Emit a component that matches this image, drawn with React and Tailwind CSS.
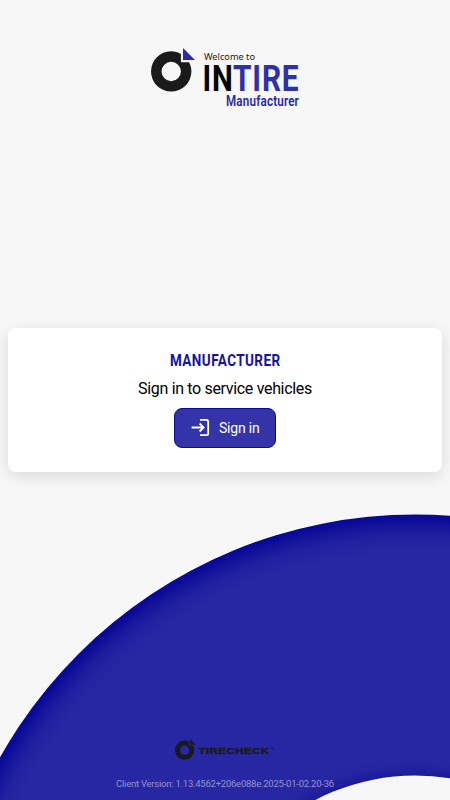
const TireMark = ({ className, arrow }) => (
  <svg viewBox="0 0 44 44" className={className} aria-hidden="true">
    <path
      fill="#1a1a1a"
      fillRule="evenodd"
      d="M20 3.2C23.6 3.2 27 4.2 29.9 5.9V14.2H38.1C39.6 17 40.4 20.2 40.4 23.5A20.2 20.2 0 1 1 20 3.2ZM20.2 13.8A9.7 9.7 0 1 0 20.2 33.2A9.7 9.7 0 1 0 20.2 13.8Z"
    />
    <path fill={arrow} d="M32 0L44 12H32Z" />
  </svg>
);

const SignInIcon = () => (
  <svg viewBox="0 0 20 18" className="h-[18px] w-5" fill="none" stroke="white" strokeWidth="1.8" aria-hidden="true">
    <path d="M0.6 8.5H12.5M8.6 4.5L12.6 8.5L8.6 12.5" />
    <path d="M9 0.9H15.6Q17.2 0.9 17.2 2.5V14.5Q17.2 16.1 15.6 16.1H9" />
  </svg>
);

const BackgroundTire = () => (
  <svg viewBox="0 0 450 800" className="absolute inset-0 h-full w-full" aria-hidden="true">
    <defs>
      <radialGradient id="tire" gradientUnits="userSpaceOnUse" cx="415" cy="990.5" r="476">
        <stop offset="0.452" stopColor="#1a1a9d" />
        <stop offset="0.475" stopColor="#2525a2" />
        <stop offset="0.5" stopColor="#2727a3" />
        <stop offset="0.92" stopColor="#2727a3" />
        <stop offset="0.95" stopColor="#2222a1" />
        <stop offset="0.975" stopColor="#16169c" />
        <stop offset="0.99" stopColor="#0b0b99" />
        <stop offset="1" stopColor="#080898" />
      </radialGradient>
    </defs>
    <circle cx="415" cy="990.5" r="476" fill="url(#tire)" />
    <circle cx="415" cy="990.5" r="215" fill="#f7f7f7" />
  </svg>
);

const Logo = () => (
  <div className="flex h-16 w-[148px]">
    <TireMark className="h-11 w-11 shrink-0" arrow="#2c2caa" />
    <svg viewBox="0 0 104 64" className="h-16 w-[104px] overflow-visible" fontFamily="Roboto, sans-serif">
      <text x="9" y="11.5" fontSize="9.5" fill="#222" fontFamily="'Noto Sans', sans-serif" textLength="51" lengthAdjust="spacingAndGlyphs">
        Welcome to
      </text>
      <text x="7.5" y="43" fontSize="37.5" fontWeight="700" letterSpacing="1" fill="#000" textLength="31" lengthAdjust="spacingAndGlyphs">
        IN
      </text>
      <text x="38" y="43" fontSize="37.5" fontWeight="700" letterSpacing="1" fill="#3030ab" textLength="66.5" lengthAdjust="spacingAndGlyphs">
        TIRE
      </text>
      <text x="31" y="58" fontSize="14" fontWeight="600" letterSpacing="0.2" fill="#2727a8" textLength="73" lengthAdjust="spacingAndGlyphs">
        Manufacturer
      </text>
    </svg>
  </div>
);

const SignInCard = () => (
  <section className="mx-2 flex h-36 flex-col items-center rounded-lg bg-white pt-5 shadow-[0_4px_16px_rgba(0,0,0,0.12)]">
    <h1>
      <svg viewBox="0 0 112 24" className="h-6 w-28 overflow-visible" fontFamily="Roboto, sans-serif">
        <text x="1" y="18" fontSize="16.5" fontWeight="700" letterSpacing="0.5" fill="#1414a0" textLength="110.5" lengthAdjust="spacingAndGlyphs">
          MANUFACTURER
        </text>
      </svg>
    </h1>
    <p className="mt-[5px] text-base leading-6 tracking-[-0.33px] text-black">Sign in to service vehicles</p>
    <button className="mt-[7px] flex h-10 w-[102px] items-center gap-2 rounded-lg border border-[#0a0a99] bg-[#3434a8] pl-4 text-sm tracking-[-0.2px] text-white">
      <SignInIcon />
      <span className="-mt-px">Sign in</span>
    </button>
  </section>
);

const Footer = () => (
  <footer className="mt-auto flex flex-col items-center pb-[9px]">
    <div className="flex h-5 w-[101px] items-start">
      <TireMark className="-mt-px h-[21px] w-[21px] shrink-0" arrow="#1a1a1a" />
      <svg viewBox="0 0 80 20" className="h-5 w-20 overflow-visible" fontFamily="'Liberation Sans', sans-serif" fill="#1a1a1a">
        <text x="2.5" y="13.5" fontSize="8.8" fontWeight="700" stroke="#1a1a1a" strokeWidth="0.4" letterSpacing="0.3" textLength="71" lengthAdjust="spacingAndGlyphs">
          TIRECHECK
        </text>
        <text x="74.5" y="9.5" fontSize="3">
          TM
        </text>
      </svg>
    </div>
    <p className="mt-4 text-[9.5px] leading-[15px] tracking-[-0.24px] whitespace-nowrap text-[#9292d0]">
      Client Version: 1.13.4562+206e088e.2025-01-02.20-36
    </p>
  </footer>
);

export default function App() {
  return (
    <main className="relative h-[800px] w-full overflow-hidden bg-[#f7f7f7] font-['Roboto',sans-serif]">
      <BackgroundTire />
      <div className="relative flex h-full flex-col">
        <header className="flex h-[328px] justify-center pt-12">
          <Logo />
        </header>
        <SignInCard />
        <Footer />
      </div>
    </main>
  );
}
